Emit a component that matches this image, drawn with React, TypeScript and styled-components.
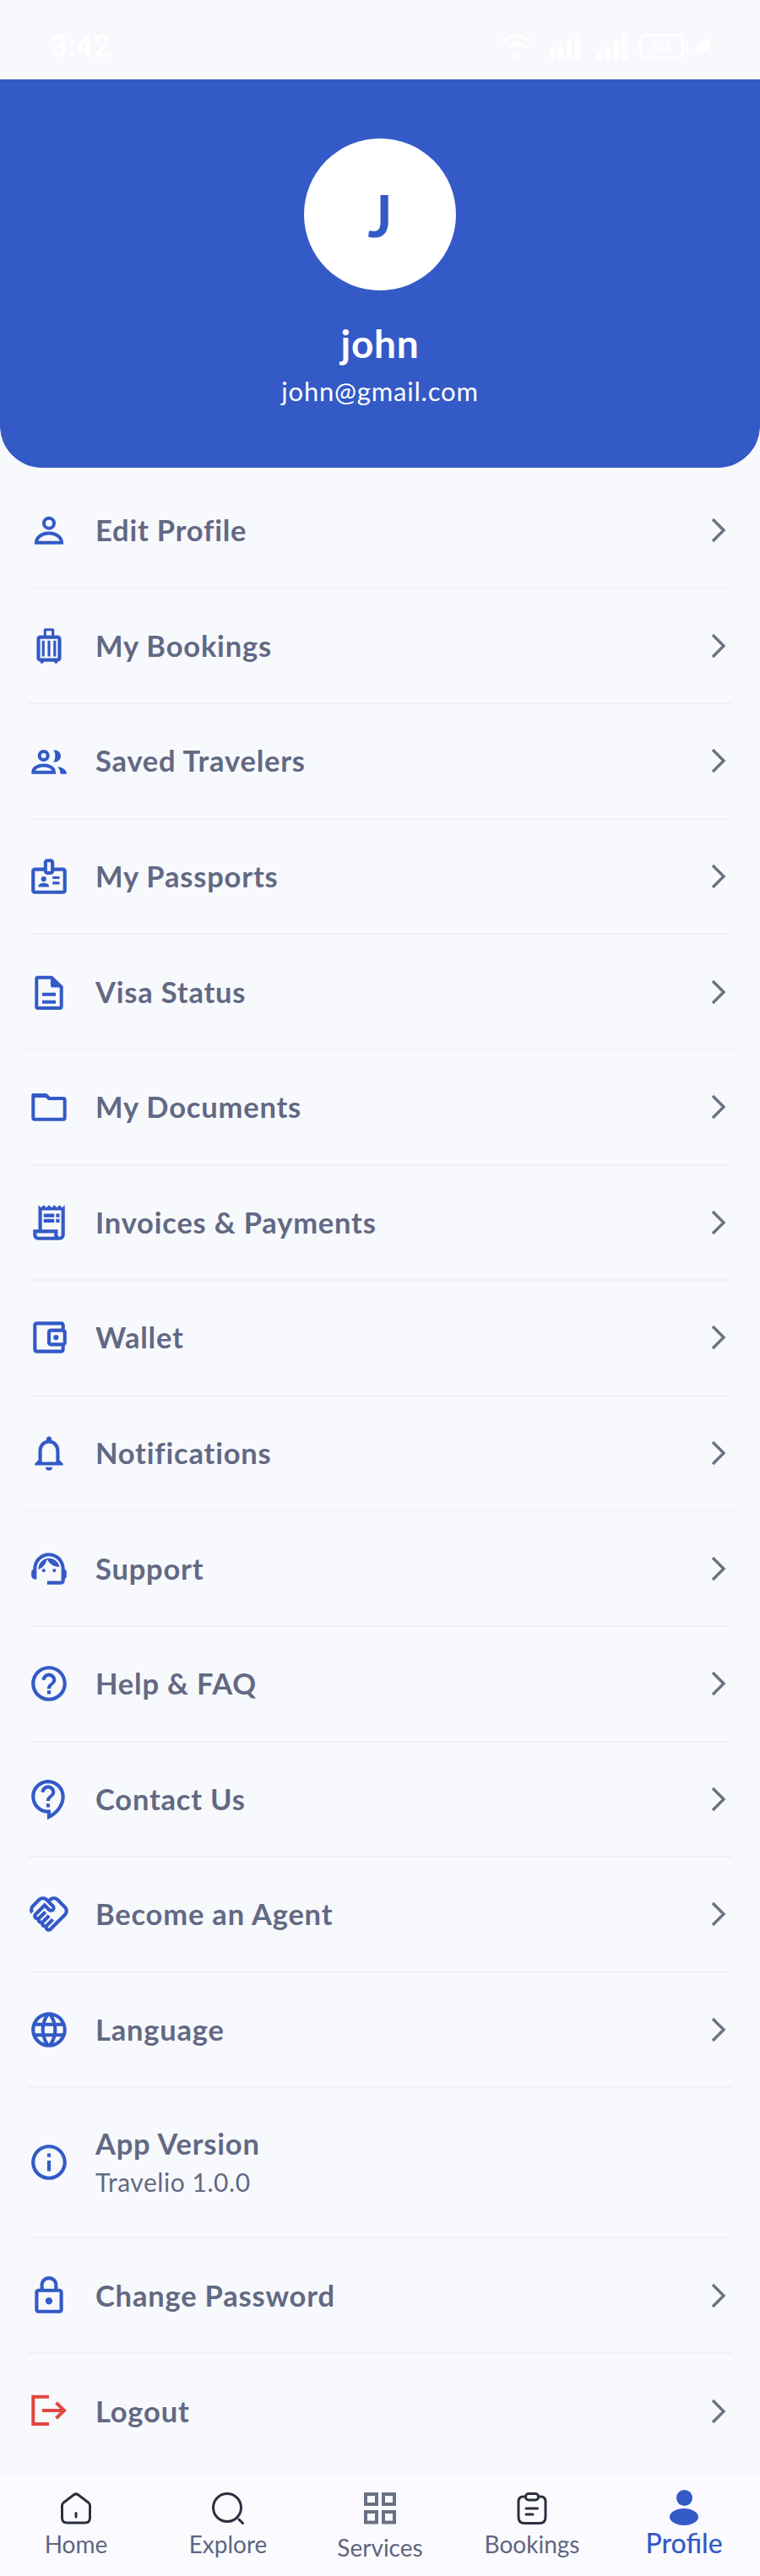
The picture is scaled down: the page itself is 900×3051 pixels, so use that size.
import React from "react";
import styled, { createGlobalStyle } from "styled-components";
import {
  MdOutlineAccountBalanceWallet,
  MdOutlineBadge,
  MdOutlineContactSupport,
  MdOutlineHandshake,
  MdOutlineHelpOutline,
  MdOutlineInfo,
  MdOutlineLanguage,
  MdOutlineLock,
  MdOutlineLuggage,
  MdOutlineNotifications,
  MdOutlineReceiptLong,
  MdOutlineSupportAgent,
} from "react-icons/md";

const BLUE = "#335ac6";
const RED = "#e2473f";

type GlyphProps = { size?: number };

// menu glyphs the icon font doesn't have in this exact cut, on a 50 unit grid
const PersonGlyph = ({ size }: GlyphProps) => (
  <svg width={size} height={size} viewBox="0 0 50 50" fill="none" stroke="currentColor" strokeWidth="4">
    <circle cx="25" cy="16.700" r="6" />
    <path d="M10 39.700 C10 33 17 28.500 25 28.500 S40 33 40 39.700 Z" />
  </svg>
);

const PeopleGlyph = ({ size }: GlyphProps) => (
  <svg width={size} height={size} viewBox="0 0 50 50" fill="none" stroke="currentColor" strokeWidth="4">
    <circle cx="18.700" cy="19" r="5" />
    <path d="M6.300 38.700 C6.300 33.500 12 30.500 18.700 30.500 S31 33.500 31 38.700 Z" />
    <path d="M30.300 12.300 C36 12.300 39 15.500 39 19.500 C39 23.500 36 26.700 30.300 26.700 C33 23 33 16 30.300 12.300 Z" fill="currentColor" stroke="none" />
    <path d="M35 32 C41 33 46 35.500 46 40.700 H38.500 C38.500 37 37 34 35 32 Z" fill="currentColor" stroke="none" />
  </svg>
);

const FileGlyph = ({ size }: GlyphProps) => (
  <svg width={size} height={size} viewBox="0 0 50 50" fill="none" stroke="currentColor" strokeWidth="4">
    <path d="M28 7.700 H12 Q10.300 7.700 10.300 9.400 V42.300 Q10.300 44 12 44 H38 Q39.700 44 39.700 42.300 V19 Z" strokeLinejoin="round" />
    <path d="M27 7 L41 19.500 H29 Q27 19.500 27 17.500 Z" fill="currentColor" stroke="none" />
    <path d="M17 27.700 H33 M17 36.700 H33" />
  </svg>
);

const FolderGlyph = ({ size }: GlyphProps) => (
  <svg width={size} height={size} viewBox="0 0 50 50" fill="none" stroke="currentColor" strokeWidth="4">
    <path d="M6.300 11 H21 L25 15 H42 Q43.700 15 43.700 17 V38 Q43.700 39.700 42 39.700 H8 Q6.300 39.700 6.300 38 Z" strokeLinejoin="round" />
    <path d="M7 9 H21 Q22 9 23 10 L27 14 H8 L5 16 V11 Q5 9 7 9 Z" fill="currentColor" stroke="none" />
  </svg>
);

const LogoutGlyph = ({ size }: GlyphProps) => (
  <svg width={size} height={size} viewBox="0 0 50 50" fill="none" stroke="currentColor" strokeWidth="4">
    <path d="M25 7.700 H6.300 V40 H25" />
    <path d="M17 24 H43 M33.500 14.700 L43 24 L33.500 33.300" />
  </svg>
);

const menuItems = [
  { label: "Edit Profile", icon: PersonGlyph },
  { label: "My Bookings", icon: MdOutlineLuggage },
  { label: "Saved Travelers", icon: PeopleGlyph },
  { label: "My Passports", icon: MdOutlineBadge },
  { label: "Visa Status", icon: FileGlyph },
  { label: "My Documents", icon: FolderGlyph },
  { label: "Invoices & Payments", icon: MdOutlineReceiptLong },
  { label: "Wallet", icon: MdOutlineAccountBalanceWallet },
  { label: "Notifications", icon: MdOutlineNotifications },
  { label: "Support", icon: MdOutlineSupportAgent },
  { label: "Help & FAQ", icon: MdOutlineHelpOutline },
  { label: "Contact Us", icon: MdOutlineContactSupport },
  { label: "Become an Agent", icon: MdOutlineHandshake },
  { label: "Language", icon: MdOutlineLanguage },
  { label: "App Version", sub: "Travelio 1.0.0", icon: MdOutlineInfo },
  { label: "Change Password", icon: MdOutlineLock },
  { label: "Logout", icon: LogoutGlyph, danger: true },
];

const HomeIcon = () => (
  <svg width="38" height="38" viewBox="0 0 38 38" fill="none" stroke="#2b3040" strokeWidth="3" strokeLinejoin="round" strokeLinecap="round">
    <path d="M2.500 15.500 Q2.500 13.500 4 12.300 L16.500 2.800 Q19 1 21.500 2.800 L34 12.300 Q35.500 13.500 35.500 15.500 V30 Q35.500 36 29.500 36 H8.500 Q2.500 36 2.500 30 Z" />
    <path d="M19 24.500 V29" />
  </svg>
);

const SearchIcon = () => (
  <svg width="38" height="38" viewBox="0 0 38 38" fill="none" stroke="#2b3040" strokeWidth="3" strokeLinecap="round">
    <circle cx="18" cy="18" r="16.500" />
    <path d="M32 32 L36.500 36.500" />
  </svg>
);

const GridIcon = () => (
  <svg width="38" height="38" viewBox="0 0 38 38" fill="none" stroke="#6b7185" strokeWidth="4">
    <rect x="2" y="2" width="13" height="12" />
    <rect x="23" y="2" width="13" height="12" />
    <rect x="2" y="23" width="13" height="12.500" />
    <rect x="23" y="23" width="13" height="12.500" />
  </svg>
);

const ClipboardIcon = () => (
  <svg width="38" height="38" viewBox="0 0 38 38" fill="none" stroke="#2b3040" strokeWidth="3" strokeLinecap="round" strokeLinejoin="round">
    <path d="M11 5 H8.500 Q3 5 3 11 V29 Q3 36.500 10 36.500 H28 Q35 36.500 35 29 V11 Q35 5 29.500 5 H27" />
    <rect x="11.500" y="1.500" width="15" height="7.500" rx="3.500" />
    <path d="M12 19 H25.500 M12 26 H20" />
  </svg>
);

const ProfileFilledIcon = () => (
  <ActiveGlyph width="38" height="42" viewBox="0 0 38 42" fill={BLUE}>
    <circle cx="19.500" cy="9.500" r="9.500" />
    <ellipse cx="19" cy="32" rx="17" ry="10" />
  </ActiveGlyph>
);

const navItems = [
  { label: "Home", icon: <HomeIcon /> },
  { label: "Explore", icon: <SearchIcon /> },
  { label: "Services", icon: <GridIcon />, gap: 9 },
  { label: "Bookings", icon: <ClipboardIcon /> },
  { label: "Profile", icon: <ProfileFilledIcon />, active: true, gap: 4 },
];

const SignalBars = () => (
  <svg width="36" height="30" viewBox="0 0 36 30" fill="#fff">
    <rect x="0" y="20" width="6" height="10" />
    <rect x="10" y="14" width="6" height="16" />
    <rect x="20" y="8" width="6" height="22" />
    <rect x="30" y="0" width="6" height="30" />
  </svg>
);

const App = () => {
  return (
    <>
      <GlobalStyle />
      <Page>
        <StatusBar>
          <Clock>3:42</Clock>
          <StatusIcons>
            <svg width="38" height="30" viewBox="0 0 38 30" fill="none" stroke="#fff" strokeWidth="4">
              <path d="M1.500 9 Q19 -3 36.500 9" />
              <path d="M8 16 Q19 8 30 16" />
              <circle cx="19" cy="26" r="3.500" fill="#fff" stroke="none" />
            </svg>
            <SignalBars />
            <SignalBars />
            <BatteryBody>64</BatteryBody>
            <svg width="20" height="18" viewBox="0 0 20 18" fill="#fff">
              <path d="M0 18 Q0 3 20 0 Q19 16 5 15 Z" />
            </svg>
          </StatusIcons>
        </StatusBar>

        <ProfileHeader>
          <Avatar>J</Avatar>
          <UserName>john</UserName>
          <UserEmail>john@gmail.com</UserEmail>
        </ProfileHeader>

        <MenuList>
          {menuItems.map((item) => {
            const Icon = item.icon;
            return (
              <MenuRow key={item.label} $tall={!!item.sub}>
                <IconSlot $danger={item.danger}>
                  <Icon size={50} />
                </IconSlot>
                <RowText>
                  <RowTitle>{item.label}</RowTitle>
                  {item.sub && <RowSub>{item.sub}</RowSub>}
                </RowText>
                {!item.sub && (
                  <Chevron viewBox="0 0 18 30">
                    <path d="M2 2 L15 15 L2 28" />
                  </Chevron>
                )}
              </MenuRow>
            );
          })}
        </MenuList>

        <BottomNav>
          {navItems.map((item) => (
            <NavItem key={item.label}>
              <NavIcon>{item.icon}</NavIcon>
              <NavLabel $active={item.active} $gap={item.gap}>
                {item.label}
              </NavLabel>
            </NavItem>
          ))}
        </BottomNav>
      </Page>
    </>
  );
};

const GlobalStyle = createGlobalStyle`
  body {
    margin: 0;
    background: #f8f9fd;
    font-family: "Lato", "Noto Sans", sans-serif;
  }
`;

const Page = styled.div`
  width: 900px;
  height: 3051px;
  display: flex;
  flex-direction: column;
  overflow: hidden;
  background: #f8f9fd;
`;

const StatusBar = styled.div`
  height: 94px;
  flex-shrink: 0;
  display: flex;
  justify-content: space-between;
  align-items: center;
  padding: 16px 57px 0 60px;
  box-sizing: border-box;
  color: #fff;
`;

const Clock = styled.span`
  font-family: "Roboto", sans-serif;
  font-size: 36px;
  font-weight: 500;
`;

const StatusIcons = styled.div`
  display: flex;
  align-items: center;
  gap: 20px;
`;

const BatteryBody = styled.div`
  position: relative;
  width: 53px;
  height: 30px;
  box-sizing: border-box;
  border: 3px solid #fff;
  border-radius: 8px;
  font-family: "Roboto", sans-serif;
  font-size: 22px;
  line-height: 24px;
  text-align: center;
  color: #fff;
  margin: 0 -7px 0 -6px;

  &::after {
    content: "";
    position: absolute;
    top: 6px;
    right: -8px;
    width: 3px;
    height: 12px;
    background: #fff;
  }
`;

const ProfileHeader = styled.header`
  height: 460px;
  flex-shrink: 0;
  box-sizing: border-box;
  padding-top: 70px;
  display: flex;
  flex-direction: column;
  align-items: center;
  background: ${BLUE};
  border-radius: 0 0 50px 50px;
  color: #fff;
`;

const Avatar = styled.div`
  width: 180px;
  height: 180px;
  border-radius: 50%;
  background: #fff;
  color: ${BLUE};
  display: flex;
  align-items: center;
  justify-content: center;
  font-size: 68px;
  font-weight: 700;
`;

const UserName = styled.div`
  margin-top: 35px;
  font-size: 46px;
  line-height: 56px;
  font-weight: 700;
  letter-spacing: 0.7px;
`;

const UserEmail = styled.div`
  margin-top: 8px;
  font-size: 31px;
  line-height: 40px;
  font-weight: 400;
  letter-spacing: 0.8px;
`;

const MenuList = styled.div`
  flex: 1;
  padding: 7px 33px 0;
`;

const MenuRow = styled.div<{ $tall?: boolean }>`
  height: ${(props) => (props.$tall ? "178px" : "136.6px")};
  box-sizing: border-box;
  display: flex;
  align-items: center;
  gap: 30px;
  border-bottom: 2px solid #f0f1f5;

  &:last-child {
    border-bottom: none;
  }
`;

const IconSlot = styled.div<{ $danger?: boolean }>`
  width: 50px;
  height: 50px;
  flex-shrink: 0;
  color: ${(props) => (props.$danger ? RED : BLUE)};

  svg {
    display: block;
  }
`;

const RowText = styled.div`
  flex: 1;
  min-width: 0;
`;

const RowTitle = styled.div`
  font-size: 34.5px;
  line-height: 44px;
  font-weight: 700;
  letter-spacing: 0.8px;
  color: #626983;
`;

const RowSub = styled.div`
  margin-top: 1px;
  font-size: 30px;
  line-height: 44px;
  font-weight: 400;
  letter-spacing: 0.55px;
  color: #626983;
`;

const Chevron = styled.svg`
  width: 18px;
  height: 30px;
  flex-shrink: 0;
  margin-right: 7px;
  fill: none;
  stroke: #6b7280;
  stroke-width: 3.4;
`;

const BottomNav = styled.nav`
  height: 121px;
  flex-shrink: 0;
  box-sizing: border-box;
  padding-top: 21px;
  display: grid;
  grid-template-columns: repeat(5, 1fr);
  background: #fbfaff;
  border-top: 1px solid #f5f5fa;
`;

const NavItem = styled.div`
  display: flex;
  flex-direction: column;
  align-items: center;
`;

const NavIcon = styled.div`
  height: 38px;
  display: flex;
  justify-content: center;

  svg {
    display: block;
    flex-shrink: 0;
  }
`;

const ActiveGlyph = styled.svg`
  margin-top: -3px;
`;

const NavLabel = styled.span<{ $active?: boolean; $gap?: number }>`
  margin-top: ${(props) => props.$gap ?? 5}px;
  font-size: ${(props) => (props.$active ? "32px" : "28px")};
  line-height: 36px;
  font-weight: ${(props) => (props.$active ? 500 : 400)};
  color: ${(props) => (props.$active ? BLUE : "#5f6680")};
`;

export default App;
